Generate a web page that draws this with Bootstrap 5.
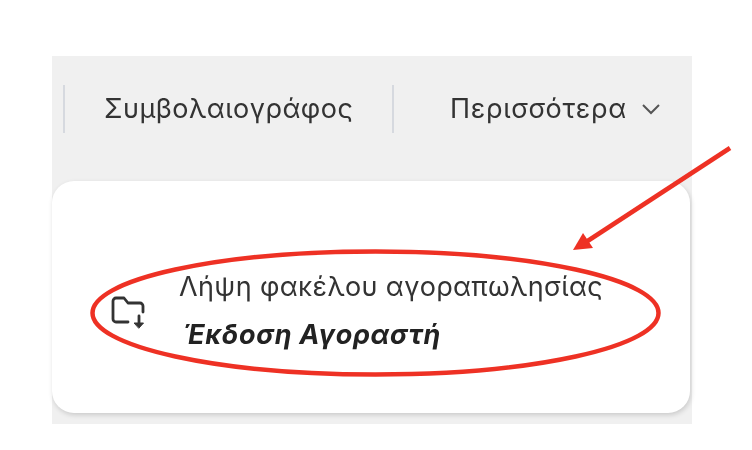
<!DOCTYPE html>
<html lang="el">
<head>
<meta charset="utf-8">
<title>Λήψη φακέλου</title>
<link href="https://cdn.jsdelivr.net/npm/bootstrap@5.3.0/dist/css/bootstrap.min.css" rel="stylesheet">
<style>
html,body{margin:0;height:450px;overflow:hidden;background:#fff}
body{font-family:"Inter","Noto Sans",sans-serif;color:#2b2b2b}
.stage{position:relative;width:752px;height:450px;padding:56px 60px 26px 52px}
.panel{background:#f0f0f0;height:368px;filter:blur(.5px)}
.topbar{height:125px;padding:29px 0 0 11px}
.sep{width:2px;height:48px;background:#d6d9df;flex:none}
.tab{font-size:27px;line-height:48px;color:#333;white-space:nowrap}
.tab-a{width:327px;padding-left:39px;letter-spacing:.47px}
.tab-b{padding-left:56px;letter-spacing:.7px}
.chev{margin-left:14px}
.sheet{background:#fff;width:638px;height:232px;border-radius:22px;box-shadow:1px 2px 5px rgba(0,0,0,.16);padding:82px 0 0 58px}
.lbl{font-size:27px;line-height:48px;color:#333;white-space:nowrap;letter-spacing:.35px}
.sub{font-size:27px;line-height:48px;font-weight:700;font-style:italic;color:#222;white-space:nowrap;padding-left:4px;letter-spacing:.7px}
.ico{margin-top:32px;margin-right:33px;flex:none}
.mark-up{position:absolute;left:0;top:0;width:752px;height:450px;pointer-events:none}
</style>
</head>
<body>
<div class="stage">
  <div class="panel">
    <div class="topbar d-flex align-items-start">
      <div class="sep"></div>
      <div class="tab tab-a">Συμβολαιογράφος</div>
      <div class="sep"></div>
      <div class="tab tab-b d-flex align-items-center">Περισσότερα
        <svg class="chev" width="20" height="12" viewBox="0 0 20 12" fill="none" stroke="#555" stroke-width="2"><path d="M2 2l8 8 8-8"/></svg>
      </div>
    </div>
    <div class="sheet d-flex align-items-start">
      <svg class="ico" width="36" height="36" viewBox="0 0 36 36" fill="none" stroke="#333" stroke-width="2.800" stroke-linecap="round" stroke-linejoin="round"><path d="M18 27H6a3 3 0 0 1-3-3V6a3 3 0 0 1 3-3h8l4 5h12a3 3 0 0 1 3 3v6"/><path d="M29 21v8"/><path d="M24.500 28h9L29 33z" fill="#333" stroke-width="1"/></svg>
      <div>
        <div class="lbl">Λήψη φακέλου αγοραπωλησίας</div>
        <div class="sub">Έκδοση Αγοραστή</div>
      </div>
    </div>
  </div>
  <svg class="mark-up" viewBox="0 0 752 450" fill="none">
    <ellipse cx="375.500" cy="313" rx="283" ry="61.500" stroke="#ee3124" stroke-width="4.500"/>
    <path d="M730 148L583 244" stroke="#ee3124" stroke-width="4.500"/>
    <path d="M573 250l10-17 10 15z" fill="#ee3124"/>
  </svg>
</div>
<script src="https://cdn.jsdelivr.net/npm/bootstrap@5.3.0/dist/js/bootstrap.bundle.min.js"></script>
</body>
</html>
